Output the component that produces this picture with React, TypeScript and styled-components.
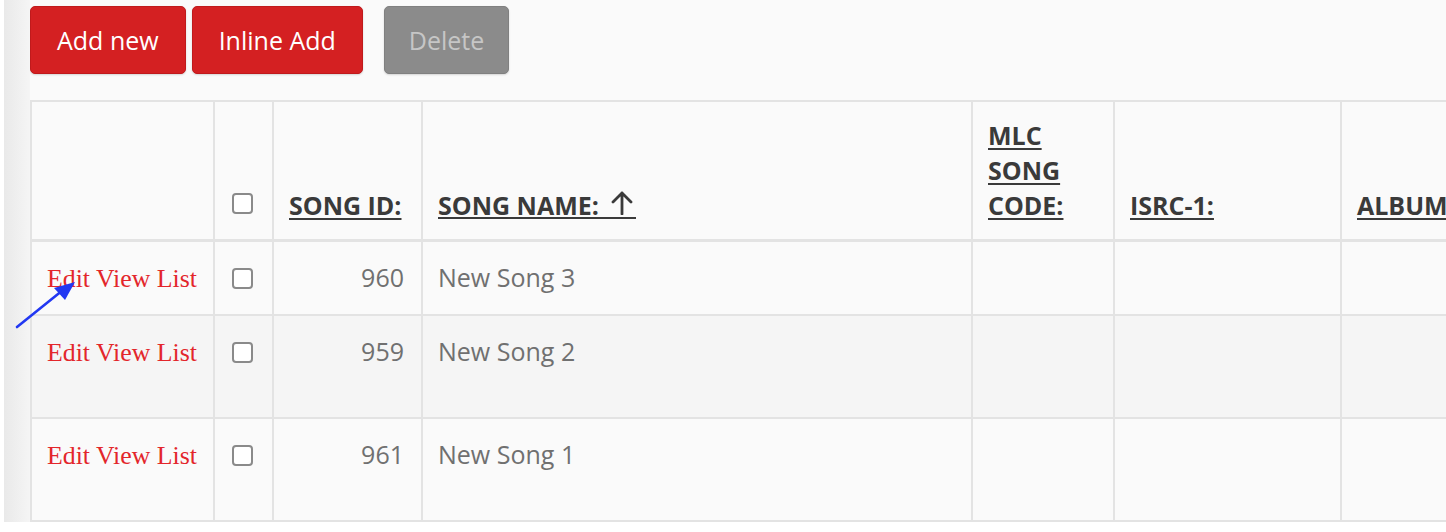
import React from 'react';
import styled, { createGlobalStyle } from 'styled-components';

type Song = { id: number; name: string; tall?: boolean };

const songs: Song[] = [
  { id: 960, name: 'New Song 3' },
  { id: 959, name: 'New Song 2', tall: true },
  { id: 961, name: 'New Song 1', tall: true },
];

const App = () => {
  return (
    <>
      <GlobalStyle />
      <Frame>
        <SideStrip />
        <Main>
          <Toolbar>
            <ActionButton>Add new</ActionButton>
            <ActionButton>Inline Add</ActionButton>
            <ActionButton $disabled>Delete</ActionButton>
          </Toolbar>
          <TableWrap>
            <Table>
              <colgroup>
                <col style={{ width: 183 }} />
                <col style={{ width: 59 }} />
                <col style={{ width: 149 }} />
                <col style={{ width: 550 }} />
                <col style={{ width: 142 }} />
                <col style={{ width: 227 }} />
                <col style={{ width: 260 }} />
              </colgroup>
              <thead>
                <tr>
                  <HeadCell />
                  <HeadCell>
                    <Check type="checkbox" $head />
                  </HeadCell>
                  <HeadCell>
                    <SortLink>SONG ID:</SortLink>
                  </HeadCell>
                  <HeadCell>
                    <SortedLink>
                      SONG NAME:{' '}
                      <SortArrow viewBox="0 0 24 25" width="24" height="25">
                        <path d="M12 24V3M3 12l9-9 9 9" fill="none" stroke="currentColor" strokeWidth="2.8" strokeLinecap="round" strokeLinejoin="round" />
                      </SortArrow>
                    </SortedLink>
                  </HeadCell>
                  <HeadCell>
                    <SortLink>
                      MLC
                      <br />
                      SONG
                      <br />
                      CODE:
                    </SortLink>
                  </HeadCell>
                  <HeadCell>
                    <SortLink>ISRC-1:</SortLink>
                  </HeadCell>
                  <HeadCell>
                    <SortLink>ALBUM:</SortLink>
                  </HeadCell>
                </tr>
              </thead>
              <tbody>
                {songs.map((song, index) => (
                  <Row key={song.id} $tall={song.tall} $striped={index % 2 === 1}>
                    <Cell>
                      <RowLinks>
                        <RowLink>Edit</RowLink> <RowLink>View</RowLink> <RowLink>List</RowLink>
                      </RowLinks>
                    </Cell>
                    <Cell>
                      <Check type="checkbox" />
                    </Cell>
                    <Cell $align="right">{song.id}</Cell>
                    <Cell>{song.name}</Cell>
                    <Cell />
                    <Cell />
                    <Cell />
                  </Row>
                ))}
              </tbody>
            </Table>
          </TableWrap>
        </Main>
        <Pointer width="90" height="60" viewBox="0 0 90 60">
          <line x1="17" y1="49" x2="63" y2="12" stroke="#2238f2" strokeWidth="2.6" strokeLinecap="round" />
          <polygon points="75,4 54,10 65,22" fill="#2238f2" />
        </Pointer>
      </Frame>
    </>
  );
};

export default App;

const GlobalStyle = createGlobalStyle`
  html, body {
    margin: 0;
    padding: 0;
    background: #ffffff;
    overflow: hidden;
  }
  body {
    font-family: "Open Sans", "Liberation Sans", sans-serif;
  }
`;

const Frame = styled.div`
  position: relative;
  display: flex;
  margin-left: 4px;
  width: 1442px;
  overflow: hidden;
`;

const SideStrip = styled.div`
  flex: 0 0 26px;
  background: linear-gradient(to right, #e9e9e9, #f5f5f5);
`;

const Main = styled.div`
  flex: 1;
  min-width: 0;
  background: #fafafa;
  overflow: hidden;
`;

const Toolbar = styled.div`
  display: flex;
  gap: 6px;
  padding-top: 6px;
  margin-bottom: 26px;
`;

const ActionButton = styled.button<{ $disabled?: boolean }>`
  height: 68px;
  padding: 0 ${(p) => (p.$disabled ? '24px' : '26px')};
  border: 1px solid ${(p) => (p.$disabled ? '#808080' : '#c01a1c')};
  border-radius: 5px;
  background: ${(p) => (p.$disabled ? '#8b8b8b' : '#d42022')};
  color: ${(p) => (p.$disabled ? '#c6c6c6' : '#ffffff')};
  font-family: "Open Sans", "Liberation Sans", sans-serif;
  font-size: 25px;
  margin-left: ${(p) => (p.$disabled ? '15px' : '0')};
  box-shadow: 0 1px 2px rgba(0, 0, 0, 0.15);
`;

const TableWrap = styled.div`
  overflow: hidden;
`;

const Table = styled.table`
  table-layout: fixed;
  width: 1570px;
  border-collapse: collapse;
  background: #fafafa;
`;

const HeadCell = styled.th`
  height: 106px;
  padding: 15px 15px 16px;
  border: 2px solid #e3e3e3;
  border-bottom-width: 3px;
  vertical-align: bottom;
  text-align: left;
  font-size: 25px;
  line-height: 35px;
  font-weight: 700;
  color: #3a3a3a;
`;

const SortLink = styled.span`
  text-decoration: underline;
  text-underline-offset: 3px;
  text-decoration-thickness: 2px;
  white-space: nowrap;
`;

const SortedLink = styled.span`
  white-space: nowrap;
  padding-right: 2px;
  background: linear-gradient(#3a3a3a, #3a3a3a) 0 calc(100% - 3px) / 100% 2px no-repeat;
`;

const SortArrow = styled.svg`
  vertical-align: baseline;
  margin-left: 5px;
  color: #3a3a3a;
`;

const Row = styled.tr<{ $tall?: boolean; $striped?: boolean }>`
  height: ${(p) => (p.$tall ? '103px' : '72px')};
  background: ${(p) => (p.$striped ? '#f5f5f5' : '#fafafa')};
`;

const Cell = styled.td<{ $align?: 'left' | 'right' }>`
  padding: 17px 17px 17px 15px;
  border: 2px solid #e3e3e3;
  vertical-align: top;
  text-align: ${(p) => p.$align || 'left'};
  font-size: 25px;
  line-height: 36px;
  color: #707070;
  white-space: nowrap;
`;

const RowLinks = styled.span`
  font-family: "Liberation Serif", "Times New Roman", serif;
  font-size: 25.8px;
`;

const RowLink = styled.a`
  color: #e3262b;
  text-decoration: none;
  cursor: pointer;
`;

const Check = styled.input<{ $head?: boolean }>`
  appearance: none;
  width: 21px;
  height: 21px;
  margin: 0 0 0 2px;
  border: 2px solid #8a8a8a;
  border-radius: 4px;
  background: #ffffff;
  vertical-align: middle;
  position: relative;
  top: ${(p) => (p.$head ? '-5px' : '-2px')};
`;

const Pointer = styled.svg`
  position: absolute;
  left: -4px;
  top: 278px;
  pointer-events: none;
`;
